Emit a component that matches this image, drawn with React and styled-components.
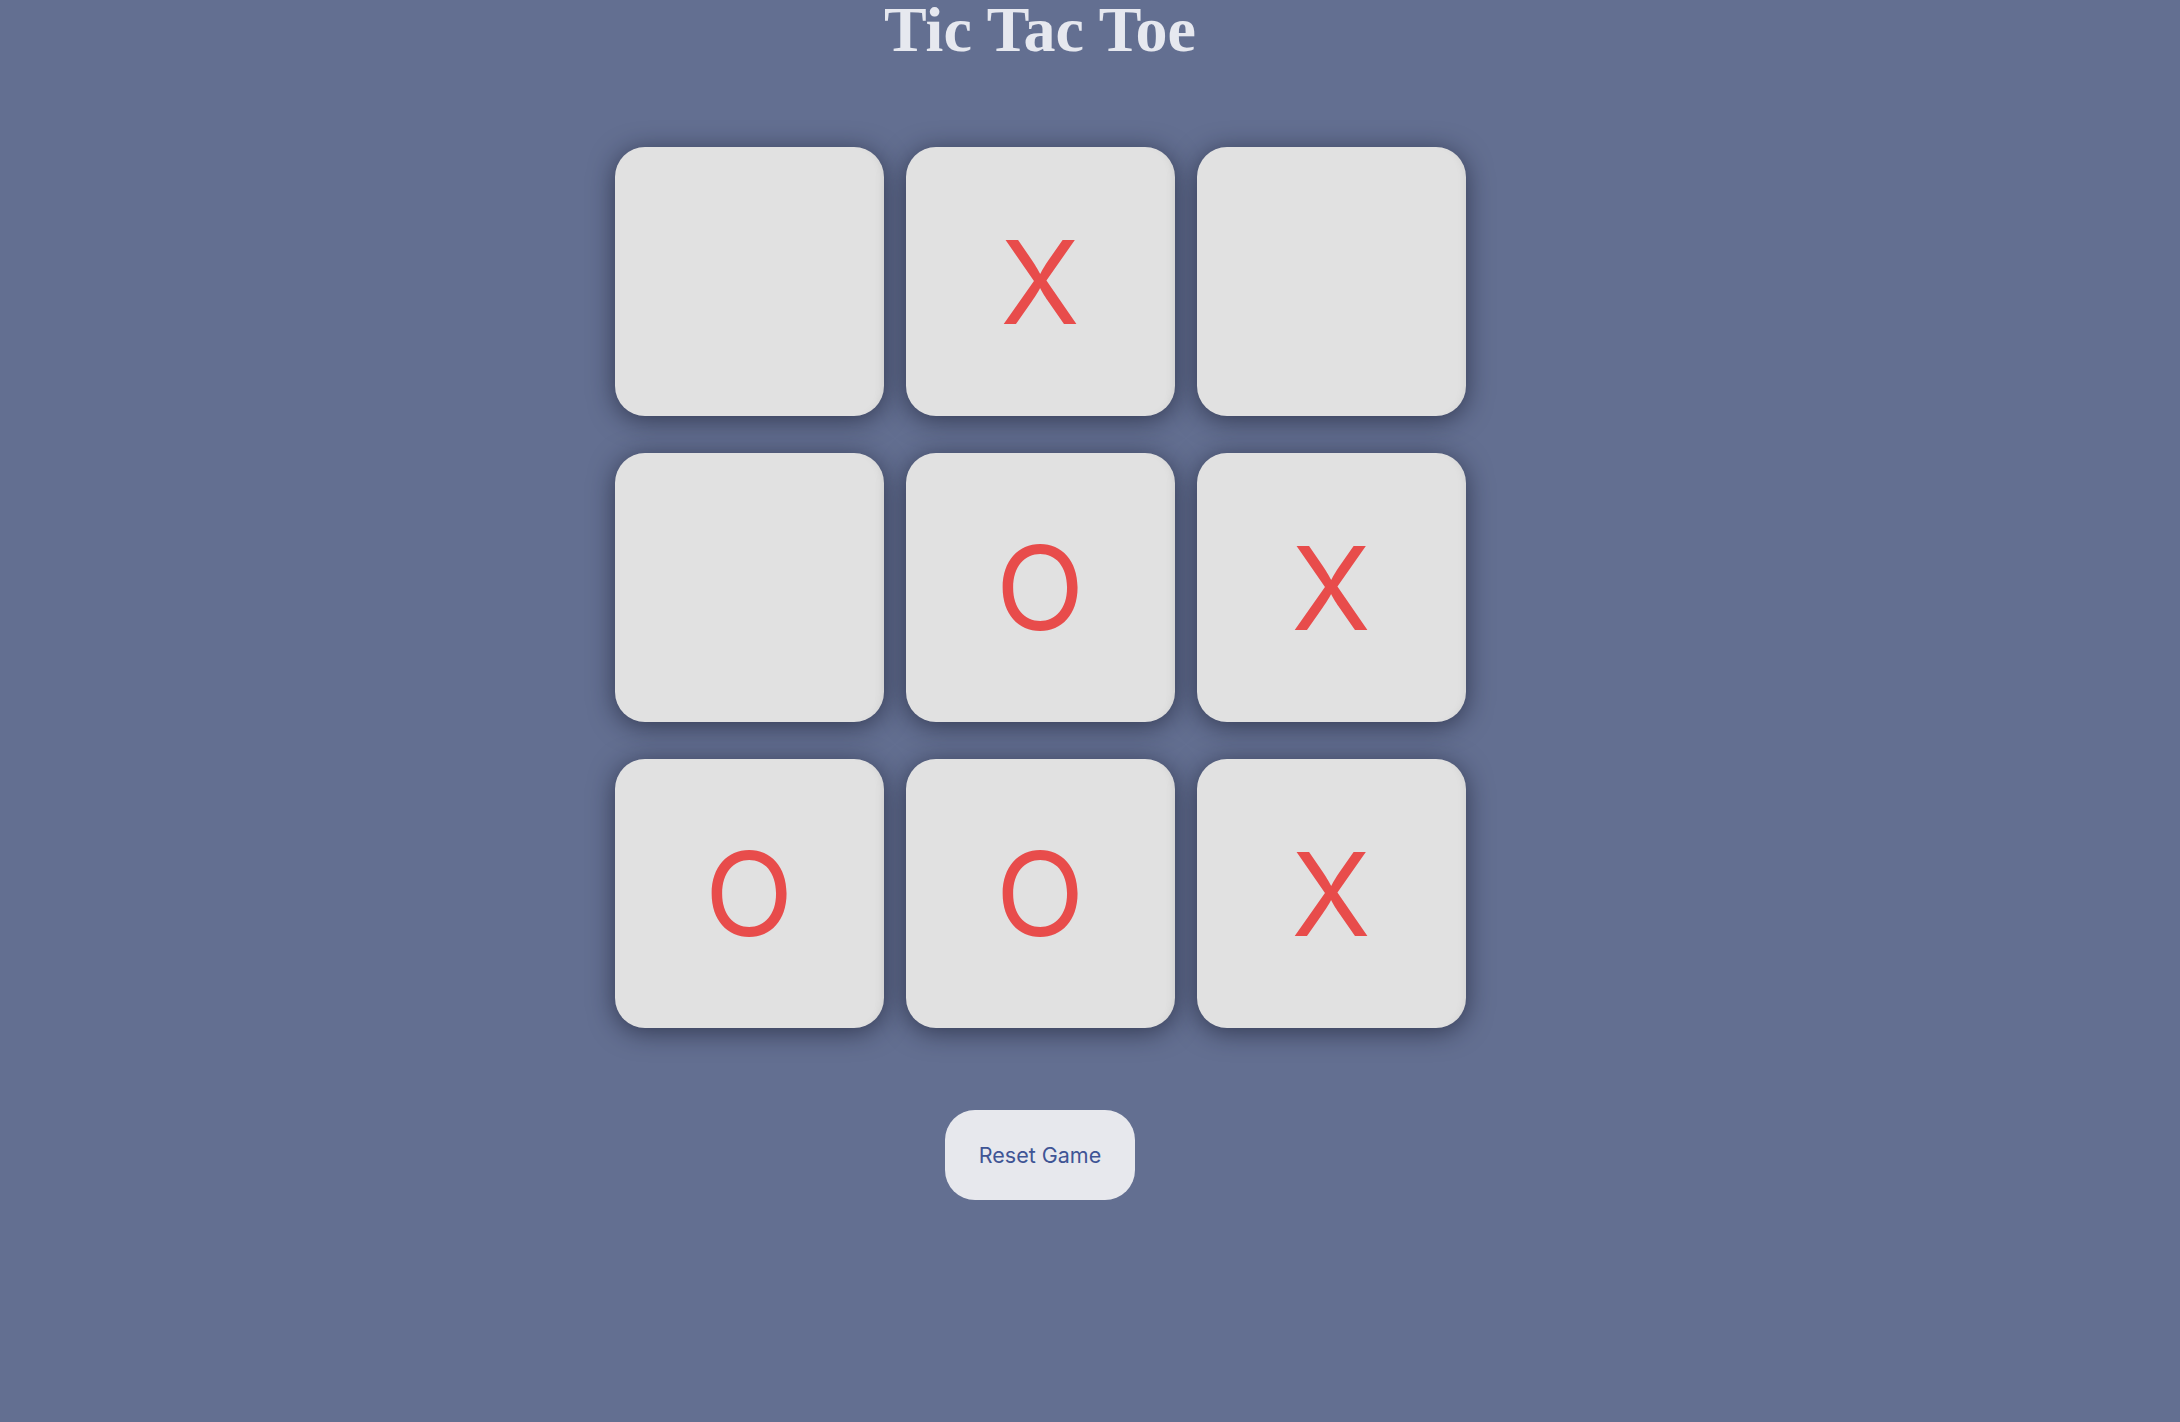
import React, { useState } from "react";
import styled, { createGlobalStyle } from "styled-components";

const GlobalStyle = createGlobalStyle`
  html, body {
    margin: 0;
    padding: 0;
    background: #636f91;
    min-height: 100%;
  }
  body {
    font-family: Inter, "Liberation Sans", sans-serif;
  }
`;

const Page = styled.div`
  min-height: 1422px;
  padding-right: 100px;
  display: flex;
  flex-direction: column;
  align-items: center;
  box-sizing: border-box;
`;

const Title = styled.h1`
  margin: -2px 0 0;
  font-family: "Liberation Serif", "Times New Roman", serif;
  font-weight: 700;
  font-size: 64px;
  line-height: 64px;
  color: #e6e8ef;
`;

const Board = styled.div`
  margin-top: 85px;
  display: grid;
  grid-template-columns: repeat(3, 269px);
  grid-auto-rows: 269px;
  column-gap: 22px;
  row-gap: 37px;
`;

const Cell = styled.button`
  border: none;
  padding: 0;
  border-radius: 30px;
  background: #e1e1e1;
  box-shadow: 0 4px 26px rgba(18, 22, 40, 0.6),
    inset -8px 0 10px -8px rgba(0, 0, 0, 0.08);
  display: flex;
  align-items: center;
  justify-content: center;
  font-family: Inter, "Liberation Sans", sans-serif;
  font-size: 116px;
  font-weight: 400;
  line-height: 1;
  color: #e84c4b;
  cursor: pointer;
`;

const ResetButton = styled.button`
  margin-top: 82px;
  width: 190px;
  height: 90px;
  border: none;
  border-radius: 30px;
  background: #e7e8ed;
  color: #3f5595;
  font-family: Inter, "Liberation Sans", sans-serif;
  font-size: 21.5px;
  cursor: pointer;
`;

const initial = ["", "X", "", "", "O", "X", "O", "O", "X"];

export default function App() {
  const [cells, setCells] = useState(initial);

  return (
    <Page>
      <GlobalStyle />
      <Title>Tic Tac Toe</Title>
      <Board>
        {cells.map((c, i) => (
          <Cell key={i}>{c}</Cell>
        ))}
      </Board>
      <ResetButton onClick={() => setCells(Array(9).fill(""))}>
        Reset Game
      </ResetButton>
    </Page>
  );
}
